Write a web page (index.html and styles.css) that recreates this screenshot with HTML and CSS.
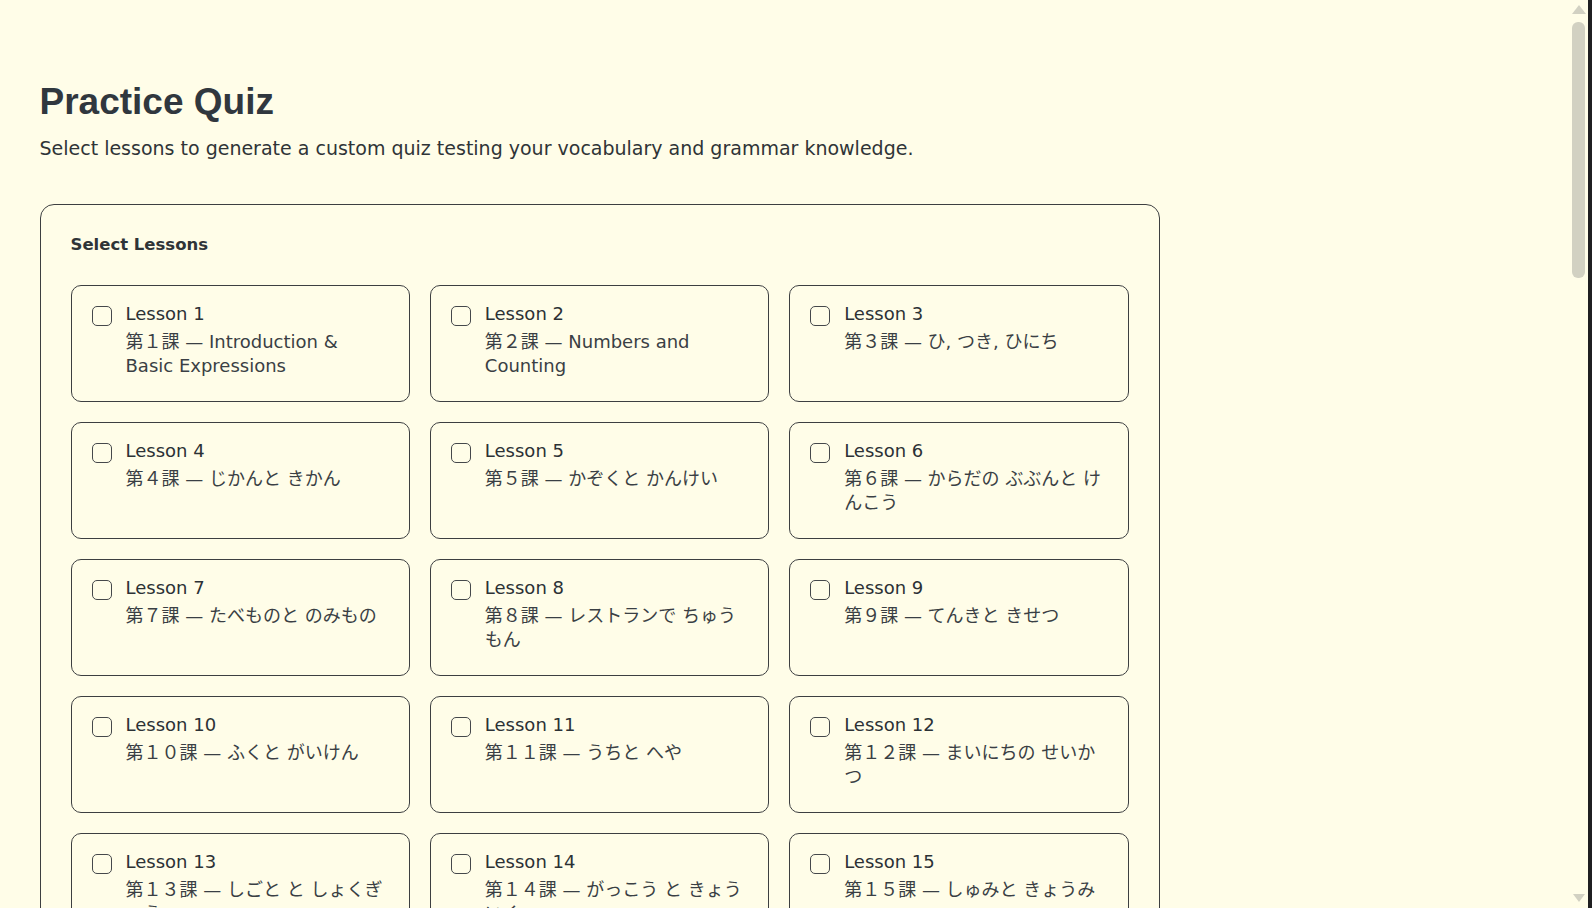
FILE: index.html
```html
<!DOCTYPE html>
<html lang="en">
<head>
<meta charset="utf-8">
<title>Practice Quiz</title>
<link rel="stylesheet" href="styles.css">
</head>
<body>
  <main class="page">
    <h1 class="title">Practice Quiz</h1>
    <p class="subtitle">Select lessons to generate a custom quiz testing your vocabulary and grammar knowledge.</p>

    <section class="panel">
      <h2 class="panel-title">Select Lessons</h2>
      <div class="lesson-grid">
        <label class="lesson"><input type="checkbox" class="check"><span class="lesson-text"><span class="lesson-name">Lesson 1</span><span class="lesson-desc">第１課 — Introduction &amp; Basic Expressions</span></span></label>
        <label class="lesson"><input type="checkbox" class="check"><span class="lesson-text"><span class="lesson-name">Lesson 2</span><span class="lesson-desc">第２課 — Numbers and Counting</span></span></label>
        <label class="lesson"><input type="checkbox" class="check"><span class="lesson-text"><span class="lesson-name">Lesson 3</span><span class="lesson-desc">第３課 — ひ, つき, ひにち</span></span></label>
        <label class="lesson"><input type="checkbox" class="check"><span class="lesson-text"><span class="lesson-name">Lesson 4</span><span class="lesson-desc">第４課 — じかんと きかん</span></span></label>
        <label class="lesson"><input type="checkbox" class="check"><span class="lesson-text"><span class="lesson-name">Lesson 5</span><span class="lesson-desc">第５課 — かぞくと かんけい</span></span></label>
        <label class="lesson"><input type="checkbox" class="check"><span class="lesson-text"><span class="lesson-name">Lesson 6</span><span class="lesson-desc">第６課 — からだの ぶぶんと けんこう</span></span></label>
        <label class="lesson"><input type="checkbox" class="check"><span class="lesson-text"><span class="lesson-name">Lesson 7</span><span class="lesson-desc">第７課 — たべものと のみもの</span></span></label>
        <label class="lesson"><input type="checkbox" class="check"><span class="lesson-text"><span class="lesson-name">Lesson 8</span><span class="lesson-desc">第８課 — レストランで ちゅうもん</span></span></label>
        <label class="lesson"><input type="checkbox" class="check"><span class="lesson-text"><span class="lesson-name">Lesson 9</span><span class="lesson-desc">第９課 — てんきと きせつ</span></span></label>
        <label class="lesson"><input type="checkbox" class="check"><span class="lesson-text"><span class="lesson-name">Lesson 10</span><span class="lesson-desc">第１０課 — ふくと がいけん</span></span></label>
        <label class="lesson"><input type="checkbox" class="check"><span class="lesson-text"><span class="lesson-name">Lesson 11</span><span class="lesson-desc">第１１課 — うちと へや</span></span></label>
        <label class="lesson"><input type="checkbox" class="check"><span class="lesson-text"><span class="lesson-name">Lesson 12</span><span class="lesson-desc">第１２課 — まいにちの せいかつ</span></span></label>
        <label class="lesson"><input type="checkbox" class="check"><span class="lesson-text"><span class="lesson-name">Lesson 13</span><span class="lesson-desc">第１３課 — しごと と しょくぎょう</span></span></label>
        <label class="lesson"><input type="checkbox" class="check"><span class="lesson-text"><span class="lesson-name">Lesson 14</span><span class="lesson-desc">第１４課 — がっこう と きょういく</span></span></label>
        <label class="lesson"><input type="checkbox" class="check"><span class="lesson-text"><span class="lesson-name">Lesson 15</span><span class="lesson-desc">第１５課 — しゅみと きょうみ</span></span></label>
        <label class="lesson"><input type="checkbox" class="check"><span class="lesson-text"><span class="lesson-name">Lesson 16</span><span class="lesson-desc">第１６課 — りょこうと こうつう</span></span></label>
        <label class="lesson"><input type="checkbox" class="check"><span class="lesson-text"><span class="lesson-name">Lesson 17</span><span class="lesson-desc">第１７課 — かいもの</span></span></label>
        <label class="lesson"><input type="checkbox" class="check"><span class="lesson-text"><span class="lesson-name">Lesson 18</span><span class="lesson-desc">第１８課 — びょうきと けが</span></span></label>
        <label class="lesson"><input type="checkbox" class="check"><span class="lesson-text"><span class="lesson-name">Lesson 19</span><span class="lesson-desc">第１９課 — でんわと れんらく</span></span></label>
        <label class="lesson"><input type="checkbox" class="check"><span class="lesson-text"><span class="lesson-name">Lesson 20</span><span class="lesson-desc">第２０課 — まちと みち</span></span></label>
        <label class="lesson"><input type="checkbox" class="check"><span class="lesson-text"><span class="lesson-name">Lesson 21</span><span class="lesson-desc">第２１課 — しぜんと かんきょう</span></span></label>
        <label class="lesson"><input type="checkbox" class="check"><span class="lesson-text"><span class="lesson-name">Lesson 22</span><span class="lesson-desc">第２２課 — スポーツ</span></span></label>
        <label class="lesson"><input type="checkbox" class="check"><span class="lesson-text"><span class="lesson-name">Lesson 23</span><span class="lesson-desc">第２３課 — ぶんかと でんとう</span></span></label>
        <label class="lesson"><input type="checkbox" class="check"><span class="lesson-text"><span class="lesson-name">Lesson 24</span><span class="lesson-desc">第２４課 — しょうらいの ゆめ</span></span></label>
      </div>
    </section>

    <section class="panel">
      <h2 class="panel-title">Quiz Settings</h2>
      <div class="settings">
        <div class="setting">
          <span class="setting-label">Number of questions</span>
          <div class="options">
            <span class="option">10</span><span class="option">20</span><span class="option">30</span>
          </div>
        </div>
        <div class="setting">
          <span class="setting-label">Question types</span>
          <div class="options">
            <span class="option">Vocabulary</span><span class="option">Grammar</span><span class="option">Kanji reading</span>
          </div>
        </div>
      </div>
    </section>

    <div class="actions">
      <button class="generate" type="button">Generate Quiz</button>
    </div>
  </main>

  <div class="scrollbar" aria-hidden="true">
    <span class="sb-up"></span>
    <span class="sb-thumb"></span>
    <span class="sb-down"></span>
  </div>
  <div class="window-edge" aria-hidden="true"></div>
</body>
</html>
```

FILE: styles.css
```css
html {
  background: #fffde8;
}

body {
  margin: 0;
  font-family: "DejaVu Sans", "Noto Sans CJK JP", sans-serif;
  color: #2f3437;
  background: #fffde8;
}

.page {
  max-width: 1120px;
  padding: 80px 39.5px 40px;
}

.title {
  margin: 0;
  font-family: "Liberation Sans", Arial, sans-serif;
  font-size: 37px;
  line-height: 44px;
  font-weight: bold;
  color: #30373e;
}

.subtitle {
  margin: 10px 0 0;
  font-size: 19px;
  line-height: 28px;
  color: #2f3437;
}

.panel {
  margin-top: 42px;
  padding: 30px;
  border: 1px solid #3d3f41;
  border-radius: 14px;
}

.panel-title {
  margin: 0 0 31px;
  font-size: 16.5px;
  line-height: 19px;
  font-weight: bold;
  color: #2f3437;
}

.lesson-grid {
  display: grid;
  grid-template-columns: repeat(3, 1fr);
  gap: 20px;
}

.lesson {
  display: flex;
  align-items: flex-start;
  gap: 14px;
  padding: 16px 22px 23px 20px;
  border: 1px solid #3d3f41;
  border-radius: 10px;
  cursor: pointer;
}

.check {
  appearance: none;
  -webkit-appearance: none;
  flex: none;
  box-sizing: border-box;
  width: 20px;
  height: 20px;
  margin: 4px 0 0;
  border: 1.5px solid #45484b;
  border-radius: 5px;
  background: transparent;
}

.lesson-text {
  display: flex;
  flex-direction: column;
  min-width: 0;
}

.lesson-name {
  font-size: 18px;
  line-height: 24px;
  color: #2c3135;
}

.lesson-desc {
  margin-top: 4px;
  font-size: 18px;
  line-height: 24px;
  color: #3a3f44;
}

.settings {
  display: flex;
  flex-direction: column;
  gap: 24px;
}

.setting {
  display: flex;
  flex-direction: column;
  gap: 12px;
}

.setting-label {
  font-size: 18px;
}

.options {
  display: flex;
  gap: 12px;
}

.option {
  padding: 8px 18px;
  border: 1px solid #3d3f41;
  border-radius: 10px;
  font-size: 16px;
}

.actions {
  margin-top: 32px;
}

.generate {
  padding: 12px 28px;
  border: 1px solid #3d3f41;
  border-radius: 10px;
  background: #2f3437;
  color: #fffde8;
  font-family: inherit;
  font-size: 18px;
}

/* browser window chrome visible in the capture */
.scrollbar {
  position: fixed;
  top: 0;
  bottom: 0;
  right: 6px;
  width: 15px;
  box-sizing: border-box;
  padding: 5px 0 6px;
  display: flex;
  flex-direction: column;
  align-items: center;
}

.sb-up {
  width: 0;
  height: 0;
  border-left: 7px solid transparent;
  border-right: 7px solid transparent;
  border-bottom: 9px solid #d2d1c2;
}

.sb-thumb {
  width: 12.5px;
  height: 256px;
  margin-top: 8px;
  border-radius: 6px;
  background: #d2d1c2;
}

.sb-down {
  margin-top: auto;
  width: 0;
  height: 0;
  border-left: 6px solid transparent;
  border-right: 6px solid transparent;
  border-top: 8px solid #d2d1c2;
}

.window-edge {
  position: fixed;
  top: 0;
  bottom: 0;
  right: 0;
  width: 4px;
  background: #1f1f21;
}
```
